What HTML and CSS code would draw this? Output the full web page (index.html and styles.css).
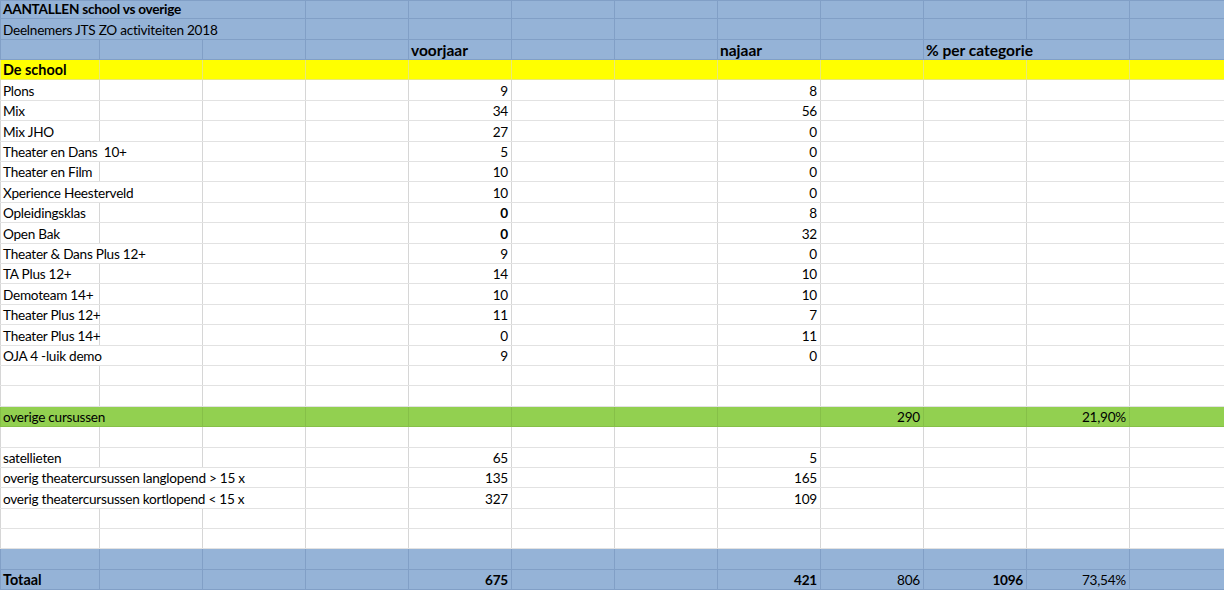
FILE: index.html
```html
<!DOCTYPE html>
<html lang="nl">
	<head>
		<meta charset="utf-8" />
		<meta name="viewport" content="width=device-width, initial-scale=1.0" />
		<title>Deelnemers JTS ZO 2018</title>
		<link rel="stylesheet" href="styles.css">
	</head>

	<body>
		<table class="sheet">
			<colgroup>
				<col class="col-a" />
				<col class="col" /><col class="col" /><col class="col" /><col class="col" /><col class="col" />
				<col class="col" /><col class="col" /><col class="col" /><col class="col" /><col class="col" />
				<col class="col-l" />
			</colgroup>
			<tbody>
				<tr class="blue first">
					<td colspan="3" class="b">AANTALLEN school vs overige</td>
					<td></td><td></td><td></td><td></td><td></td><td></td><td></td><td></td><td></td>
				</tr>
				<tr class="blue">
					<td colspan="3">Deelnemers JTS ZO activiteiten 2018</td>
					<td></td><td></td><td></td><td></td><td></td><td></td><td></td><td></td><td></td>
				</tr>
				<tr class="blue kop">
					<td></td><td></td><td></td><td></td>
					<td class="b">voorjaar</td>
					<td></td><td></td>
					<td class="b">najaar</td>
					<td></td>
					<td colspan="2" class="b">% per categorie</td>
					<td></td>
				</tr>
				<tr class="yellow">
					<td class="b head">De school</td>
					<td></td><td></td><td></td><td></td><td></td><td></td><td></td><td></td><td></td><td></td><td></td>
				</tr>

				<!-- de school -->
				<tr>
					<td>Plons</td><td></td><td></td><td></td><td class="n">9</td><td></td><td></td><td class="n">8</td><td></td><td></td><td></td><td></td>
				</tr>
				<tr>
					<td>Mix</td><td></td><td></td><td></td><td class="n">34</td><td></td><td></td><td class="n">56</td><td></td><td></td><td></td><td></td>
				</tr>
				<tr>
					<td>Mix JHO</td><td></td><td></td><td></td><td class="n">27</td><td></td><td></td><td class="n">0</td><td></td><td></td><td></td><td></td>
				</tr>
				<tr>
					<td colspan="2">Theater en Dans&nbsp; 10+</td><td></td><td></td><td class="n">5</td><td></td><td></td><td class="n">0</td><td></td><td></td><td></td><td></td>
				</tr>
				<tr>
					<td>Theater en Film</td><td></td><td></td><td></td><td class="n">10</td><td></td><td></td><td class="n">0</td><td></td><td></td><td></td><td></td>
				</tr>
				<tr>
					<td colspan="2">Xperience Heesterveld</td><td></td><td></td><td class="n">10</td><td></td><td></td><td class="n">0</td><td></td><td></td><td></td><td></td>
				</tr>
				<tr>
					<td>Opleidingsklas</td><td></td><td></td><td></td><td class="n b">0</td><td></td><td></td><td class="n">8</td><td></td><td></td><td></td><td></td>
				</tr>
				<tr>
					<td>Open Bak</td><td></td><td></td><td></td><td class="n b">0</td><td></td><td></td><td class="n">32</td><td></td><td></td><td></td><td></td>
				</tr>
				<tr>
					<td colspan="2">Theater &amp; Dans Plus 12+</td><td></td><td></td><td class="n">9</td><td></td><td></td><td class="n">0</td><td></td><td></td><td></td><td></td>
				</tr>
				<tr>
					<td>TA Plus 12+</td><td></td><td></td><td></td><td class="n">14</td><td></td><td></td><td class="n">10</td><td></td><td></td><td></td><td></td>
				</tr>
				<tr>
					<td>Demoteam 14+</td><td></td><td></td><td></td><td class="n">10</td><td></td><td></td><td class="n">10</td><td></td><td></td><td></td><td></td>
				</tr>
				<tr>
					<td>Theater Plus 12+</td><td></td><td></td><td></td><td class="n">11</td><td></td><td></td><td class="n">7</td><td></td><td></td><td></td><td></td>
				</tr>
				<tr>
					<td>Theater Plus 14+</td><td></td><td></td><td></td><td class="n">0</td><td></td><td></td><td class="n">11</td><td></td><td></td><td></td><td></td>
				</tr>
				<tr>
					<td colspan="2">OJA 4 -luik demo</td><td></td><td></td><td class="n">9</td><td></td><td></td><td class="n">0</td><td></td><td></td><td></td><td></td>
				</tr>
				<tr>
					<td></td><td></td><td></td><td></td><td></td><td></td><td></td><td></td><td></td><td></td><td></td><td></td>
				</tr>
				<tr>
					<td></td><td></td><td></td><td></td><td></td><td></td><td></td><td></td><td></td><td></td><td></td><td></td>
				</tr>

				<!-- overige -->
				<tr class="green">
					<td colspan="2">overige cursussen</td><td></td><td></td><td></td><td></td><td></td><td></td><td class="n">290</td><td></td><td class="n">21,90%</td><td></td>
				</tr>
				<tr>
					<td></td><td></td><td></td><td></td><td></td><td></td><td></td><td></td><td></td><td></td><td></td><td></td>
				</tr>
				<tr>
					<td>satellieten</td><td></td><td></td><td></td><td class="n">65</td><td></td><td></td><td class="n">5</td><td></td><td></td><td></td><td></td>
				</tr>
				<tr>
					<td colspan="3">overig theatercursussen langlopend &gt; 15 x</td><td></td><td class="n">135</td><td></td><td></td><td class="n">165</td><td></td><td></td><td></td><td></td>
				</tr>
				<tr>
					<td colspan="3">overig theatercursussen kortlopend &lt; 15 x</td><td></td><td class="n">327</td><td></td><td></td><td class="n">109</td><td></td><td></td><td></td><td></td>
				</tr>
				<tr>
					<td></td><td></td><td></td><td></td><td></td><td></td><td></td><td></td><td></td><td></td><td></td><td></td>
				</tr>
				<tr>
					<td></td><td></td><td></td><td></td><td></td><td></td><td></td><td></td><td></td><td></td><td></td><td></td>
				</tr>

				<!-- totaal -->
				<tr class="blue">
					<td></td><td></td><td></td><td></td><td></td><td></td><td></td><td></td><td></td><td></td><td></td><td></td>
				</tr>
				<tr class="blue">
					<td class="b head">Totaal</td><td></td><td></td><td></td><td class="n b">675</td><td></td><td></td><td class="n b">421</td><td class="n">806</td><td class="n b">1096</td><td class="n">73,54%</td><td></td>
				</tr>
			</tbody>
		</table>
	</body>
</html>
```

FILE: styles.css
```css
body {
	margin: 0;
	overflow: hidden;
	background: #fff;
	font-family: Lato, "Liberation Sans", sans-serif;
	font-size: 13.6px;
	letter-spacing: -0.25px;
	color: #000;
}

.sheet {
	width: 1224px;
	border-collapse: collapse;
	table-layout: fixed;
}

.col-a {
	width: 99px;
}

.col {
	width: 103px;
}

.col-l {
	width: 95px;
}

.sheet tr {
	height: 20.4px;
}

.sheet tr.first {
	height: 18.3px;
}

.sheet td {
	padding: 0 3px 1px 2px;
	border: 1px solid #d6d6d6;
	border-top-color: #e2e2e2;
	border-bottom-color: #e2e2e2;
	line-height: 16px;
	white-space: nowrap;
	overflow: visible;
	vertical-align: bottom;
}

.sheet td.n {
	text-align: right;
}

.sheet td.b {
	font-weight: bold;
}

.sheet td.head {
	font-size: 14.4px;
	letter-spacing: 0;
}

.kop td.b {
	font-size: 15.5px;
	letter-spacing: 0;
}

/* gekleurde rijen */
.blue td {
	background: #95b3d7;
	border-color: #819fc6;
}

.yellow td {
	background: #ffff00;
	border-color: #e8e87a;
}

.green td {
	background: #92d050;
	border-color: #86c048;
}
```
